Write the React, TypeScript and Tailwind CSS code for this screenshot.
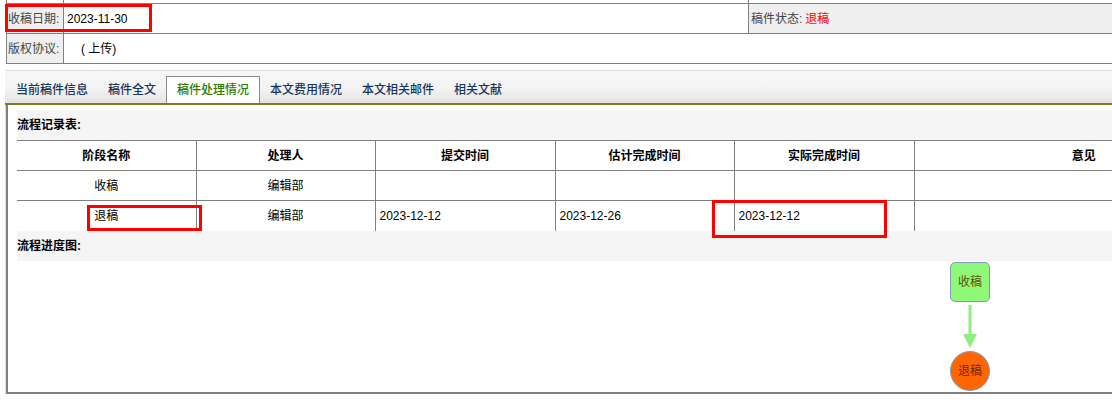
import React from 'react'

const font = { fontFamily: '"Liberation Sans", "Noto Sans CJK SC", sans-serif' }

const tabs = ['当前稿件信息', '稿件全文', '稿件处理情况', '本文费用情况', '本文相关邮件', '相关文献']

const cols = ['阶段名称', '处理人', '提交时间', '估计完成时间', '实际完成时间', '意见']

const rows = [
  ['收稿', '编辑部', '', '', '', ''],
  ['退稿', '编辑部', '2023-12-12', '2023-12-26', '2023-12-12', ''],
]

export default function App() {
  return (
    <div className="relative w-[1112px] h-[409px] overflow-hidden bg-white text-[12px] text-black" style={font}>
      {/* top info table */}
      <div className="ml-[6px] w-[1200px] -mt-[27px]">
        <div className="flex h-[31px] border-b border-[#808080]">
          <div className="w-[57px] border-l border-[#808080]" />
          <div className="w-[685px] border-l border-[#808080]" />
          <div className="flex-1 border-l border-[#808080]" />
        </div>
        <div className="flex h-[30px] border-b border-[#808080]">
          <div className="w-[57px] border-l border-[#808080] bg-[#efefef] text-[#444] flex items-center pl-[1px]">收稿日期:</div>
          <div className="w-[685px] border-l border-[#808080] flex items-center pl-[3px]">2023-11-30</div>
          <div className="flex-1 border-l border-[#808080] bg-[#efefef] flex items-center pl-[2px]">
            <span className="text-[#444]">稿件状态:</span>
            <span className="text-[#ff0000] ml-[3px]">退稿</span>
          </div>
        </div>
        <div className="flex h-[30px] border-b border-[#808080]">
          <div className="w-[57px] border-l border-[#808080] bg-[#efefef] text-[#444] flex items-center pl-[1px]">版权协议:</div>
          <div className="flex-1 border-l border-[#808080] flex items-center pl-[17px]">( 上传)</div>
        </div>
      </div>

      {/* tabs */}
      <div className="mt-[6px] ml-[5px] w-[1200px] h-[35px] border-t border-[#dddddd] border-b-2 border-b-[#7d7d1e] bg-gradient-to-b from-[#f7f7f7] via-[#f4f4f4] to-[#e4e4e4] flex items-end pl-[1px]">
        {tabs.map((t, i) =>
          i === 2 ? (
            <div key={t} className="h-[27px] px-[10px] flex items-center font-medium bg-white border border-b-0 border-[#8a8a8a] text-[#2e7d00]">
              {t}
            </div>
          ) : (
            <div key={t} className="h-[27px] px-[10px] flex items-center font-medium text-[#17365d]">
              {t}
            </div>
          )
        )}
      </div>

      {/* content panel */}
      <div className="ml-[5px] w-[1260px] h-[289px] border-l border-[#dddddd]">
        <div className="h-full border-l-2 border-b-2 border-[#808080] pl-[9px] pt-[5px]">
          <div className="h-[30px] bg-[#f5f5f5] flex items-center font-bold">流程记录表:</div>
          <table className="w-[1236px] border-collapse table-fixed bg-white">
            <colgroup>
              <col className="w-[179px]" />
              <col className="w-[179px]" />
              <col className="w-[180px]" />
              <col className="w-[179px]" />
              <col className="w-[180px]" />
              <col />
            </colgroup>
            <thead>
              <tr className="h-[30px] border-t border-[#808080]">
                {cols.map((c, i) => (
                  <th key={c} className={`font-bold text-center p-0 ${i > 0 ? 'border-l border-[#808080]' : ''}`}>
                    {c}
                  </th>
                ))}
              </tr>
            </thead>
            <tbody>
              {rows.map((r, ri) => (
                <tr key={ri} className="h-[30px] border-t border-[#808080]">
                  {r.map((v, i) => (
                    <td
                      key={i}
                      className={`p-0 ${i < 2 ? 'text-center' : 'text-left pl-[4px]'} ${i > 0 ? 'border-l border-[#808080]' : ''}`}
                    >
                      {v}
                    </td>
                  ))}
                </tr>
              ))}
            </tbody>
          </table>
          <div className="h-[30px] bg-[#f5f5f5] flex items-center font-bold">流程进度图:</div>

          {/* flow diagram */}
          <div className="relative h-[130px]">
            <div className="absolute left-[933px] top-[1px] w-[40px] h-[40px] rounded-[5px] bg-[#90f878] border border-[#7f9bc6] flex items-center justify-center text-[#5a5200]">
              收稿
            </div>
            <svg className="absolute left-[944px] top-[43px]" width="18" height="46" viewBox="0 0 18 46">
              <line x1="9" y1="1" x2="9" y2="33" stroke="#90ee80" strokeWidth="3" />
              <polygon points="2,30 16,30 9,44" fill="#90ee80" />
            </svg>
            <div className="absolute left-[933px] top-[90px] w-[40px] h-[40px] rounded-full bg-[#ff6600] border border-[#7f9bc6] flex items-center justify-center text-[#6b2a00]">
              退稿
            </div>
          </div>
        </div>
      </div>

      {/* red annotation boxes */}
      <div className="absolute left-[5px] top-[4px] w-[147px] h-[28px] border-[3px] border-[#ff0000]" />
      <div className="absolute left-[87px] top-[205px] w-[115px] h-[26px] border-[3px] border-[#ff0000]" />
      <div className="absolute left-[712px] top-[200px] w-[175px] h-[38px] border-[3px] border-[#ff0000]" />
    </div>
  )
}
